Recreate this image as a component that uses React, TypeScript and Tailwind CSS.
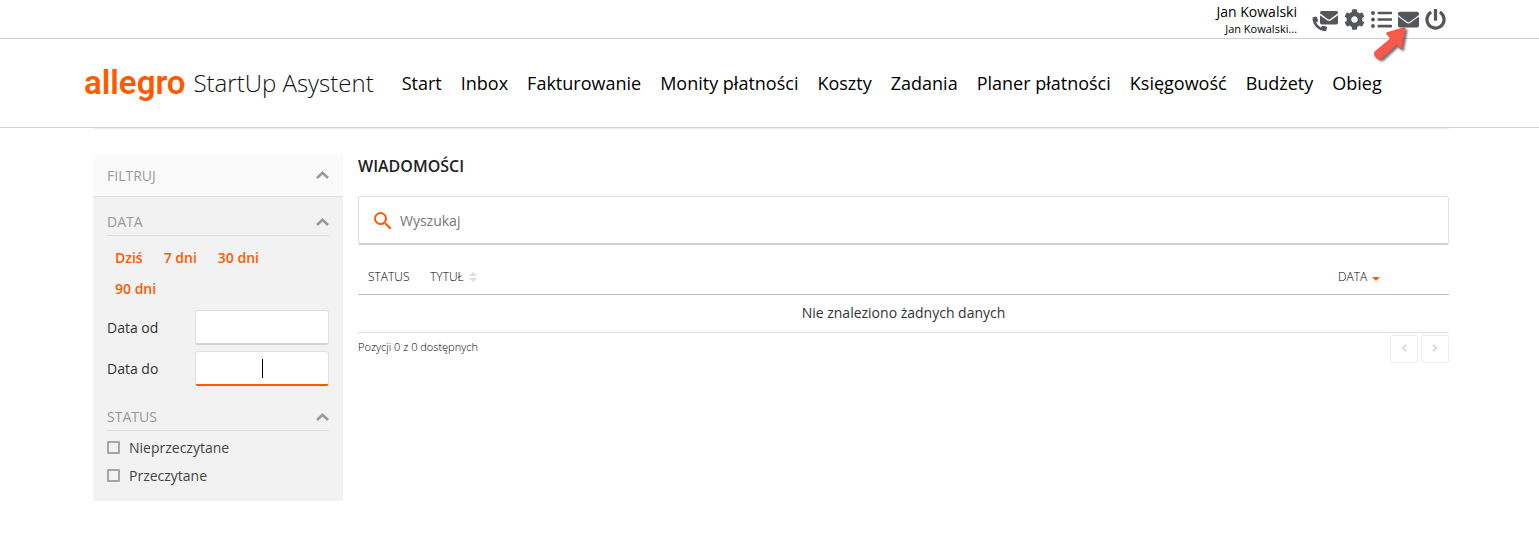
import { useState } from 'react'
import type { ReactNode } from 'react'
import { FaCog, FaEnvelope, FaListUl, FaPowerOff } from 'react-icons/fa'
import { MdSearch } from 'react-icons/md'

const navItems = [
  'Start',
  'Inbox',
  'Fakturowanie',
  'Monity płatności',
  'Koszty',
  'Zadania',
  'Planer płatności',
  'Księgowość',
  'Budżety',
  'Obieg',
]

const ranges = ['Dziś', '7 dni', '30 dni', '90 dni']

function ArrowUp() {
  return (
    <svg className="w-[13px] h-2" viewBox="0 0 13 8" fill="none" aria-hidden="true">
      <path d="M1 7l5.500-5.200L12 7" stroke="#999" strokeWidth="2.600" />
    </svg>
  )
}

function PhoneMail() {
  return (
    <svg className="w-[26px] h-[22px]" viewBox="0 0 26 22" fill="currentColor" aria-hidden="true">
      <path d="M.5 8.300q0-.8.700-1l2.600-.8q.7-.2 1 .5l1.300 3.200q.2.600-.3 1.100l-1.700 1.300q1.500 3.200 4.700 4.800l1.500-1.700q.4-.5 1.100-.3l3.200 1.400q.6.300.5 1l-.8 2.700q-.2.700-1 .7C6.500 21 .5 15.300.5 8.300z" />
      <path d="M7 0h19v16H7z" fill="#fff" />
      <path d="M9.700 1h14.600q1.700 0 1.700 1.700v.6l-8 5.900q-1 .7-2 0L8 3.300v-.6Q8 1 9.700 1z" />
      <path d="M8 5.200l7.300 5.300q1.700 1.100 3.400 0L26 5.200v7.600q0 1.700-1.700 1.700H9.700Q8 14.500 8 12.800z" />
    </svg>
  )
}

function PointerArrow() {
  return (
    <svg
      className="absolute left-[-26px] top-[17px] w-10 h-10 pointer-events-none drop-shadow-[2px_2px_1px_rgba(0,0,0,0.55)]"
      viewBox="0 0 40 40"
      aria-hidden="true"
    >
      <path
        d="M32 1.500L15 6.500q-1.400.6-.4 1.500l4.200 4.300L3 25.500q-2 2.500.6 5.600t5.800 1.700L24.500 19l4 3.800q1 .7 1.300-.5L33.300 2.800q0-1.500-1.300-1.300z"
        fill="#f9594a"
        stroke="#e04a3e"
        strokeWidth=".5"
      />
    </svg>
  )
}

function TopBar() {
  return (
    <div className="flex justify-end h-[39px] pr-[93px] border-b border-[#d0d0d0]">
      <div className="mr-[15px] text-right text-black">
        <p className="pt-[2px] text-[14px] leading-5">Jan Kowalski</p>
        <p className="text-[11px] leading-[14px]">Jan Kowalski…</p>
      </div>
      <div className="flex items-center gap-[6px] text-[#54565a]">
        <button type="button" aria-label="Kontakt" className="mt-1">
          <PhoneMail />
        </button>
        <button type="button" aria-label="Ustawienia">
          <FaCog className="w-[21px] h-[21px]" />
        </button>
        <button type="button" aria-label="Lista">
          <FaListUl className="w-[21px] h-[21px]" />
        </button>
        <button type="button" aria-label="Wiadomości" className="relative">
          <FaEnvelope className="w-[21px] h-[21px]" />
          <PointerArrow />
        </button>
        <button type="button" aria-label="Wyloguj">
          <FaPowerOff className="w-[21px] h-[21px]" />
        </button>
      </div>
    </div>
  )
}

function Header() {
  return (
    <header className="flex items-center h-[89px] pl-[84px] pr-[90px] border-b border-[#d0d0d0]">
      <a href="#" className="flex items-center whitespace-nowrap">
        <span className="font-['Roboto',sans-serif] font-semibold text-[33px] leading-10 text-[#ff5a00]">allegro</span>
        <span className="ml-2 text-[24px] leading-8 font-light text-[#111]">StartUp Asystent</span>
      </a>
      <nav className="flex gap-[19px] ml-7 text-[18px] text-black whitespace-nowrap">
        {navItems.map((item) => (
          <a key={item} href="#">
            {item}
          </a>
        ))}
      </nav>
    </header>
  )
}

function FilterSection({ title, className, children }: { title: string; className?: string; children: ReactNode }) {
  return (
    <section className={className}>
      <button
        type="button"
        className="flex items-center justify-between w-full h-7 border-b border-[#dfdfdf] text-[14px] text-[#999]"
      >
        {title}
        <ArrowUp />
      </button>
      {children}
    </section>
  )
}

function Sidebar() {
  const [from, setFrom] = useState('')
  const [to, setTo] = useState('')

  return (
    <aside className="w-[250px] shrink-0 bg-[#f2f2f2] text-[14px] text-[#333]">
      <button
        type="button"
        className="flex items-center justify-between w-full h-[43px] px-[14px] bg-[#fafafa] border-b border-[#dfdfdf] text-[#999]"
      >
        FILTRUJ
        <ArrowUp />
      </button>
      <div className="px-[14px] pt-[11px] pb-3">
        <FilterSection title="DATA">
          <div className="flex flex-wrap gap-x-[5px] pt-[6px]">
            {ranges.map((range) => (
              <button key={range} type="button" className="h-[31px] px-2 font-semibold text-[#ff5a00]">
                {range}
              </button>
            ))}
          </div>
          <div className="flex items-center justify-between mt-[6px]">
            <label htmlFor="date-from">Data od</label>
            <input
              id="date-from"
              value={from}
              onChange={(e) => setFrom(e.target.value)}
              className="w-[134px] h-[35px] rounded-[3px] border border-b-2 border-[#e0e0e0] border-b-[#d4d6d6] bg-white text-center outline-none"
            />
          </div>
          <div className="flex items-center justify-between mt-[6px]">
            <label htmlFor="date-to">Data do</label>
            <div className="relative">
              <input
                id="date-to"
                value={to}
                onChange={(e) => setTo(e.target.value)}
                className="block w-[134px] h-[35px] rounded-[3px] border border-b-2 border-[#e0e0e0] border-b-[#ff5a00] bg-white text-center outline-none"
              />
              {to === '' && <span className="absolute left-[67px] top-2 w-px h-[19px] bg-black pointer-events-none" />}
            </div>
          </div>
        </FilterSection>
        <FilterSection title="STATUS" className="mt-[17px]">
          <div className="flex flex-col pt-[2px] text-[#444]">
            {['Nieprzeczytane', 'Przeczytane'].map((label) => (
              <label key={label} className="flex items-center gap-[9px] h-7">
                <input
                  type="checkbox"
                  className="appearance-none w-[13px] h-[13px] rounded-[1px] border-2 border-[#a6a6a6] checked:bg-[#ff5a00]"
                />
                {label}
              </label>
            ))}
          </div>
        </FilterSection>
      </div>
    </aside>
  )
}

function Messages() {
  const [query, setQuery] = useState('')

  return (
    <main className="flex-1 min-w-0 text-[#333]">
      <h1 className="h-[42px] text-[16px] leading-6 font-semibold text-[#222]">WIADOMOŚCI</h1>
      <label className="flex items-center h-[49px] pl-3 border border-b-2 border-[#e0e0e0] border-b-[#d0d0d0] rounded-[3px]">
        <MdSearch className="w-6 h-6 mt-[2px] text-[#ff5a00]" />
        <input
          value={query}
          onChange={(e) => setQuery(e.target.value)}
          placeholder="Wyszukaj"
          aria-label="Wyszukaj"
          className="flex-1 ml-[5px] text-[14px] outline-none placeholder:text-[#777]"
        />
      </label>
      <table className="w-full mt-[14px]">
        <thead>
          <tr className="h-[35px] border-b border-[#bbb] text-left text-[12px] text-black">
            <th className="w-[62px] pt-[2px] pl-[10px] font-light">STATUS</th>
            <th className="pt-[2px] pl-[10px] font-light">
              <button type="button" className="flex items-center gap-[5px]">
                TYTUŁ
                <svg className="w-2 h-[10px]" viewBox="0 0 8 10" fill="#ddd" aria-hidden="true">
                  <path d="M4 0l4 4H0zM4 10l4-4H0z" />
                </svg>
              </button>
            </th>
            <th className="w-[111px] pt-[2px] font-light">
              <button type="button" className="flex items-center gap-[5px]">
                DATA
                <svg className="w-2 h-1 mt-1" viewBox="0 0 8 4" fill="#ff5a00" aria-hidden="true">
                  <path d="M0 0h8L4 4z" />
                </svg>
              </button>
            </th>
          </tr>
        </thead>
        <tbody>
          <tr className="h-[38px] border-b border-[#e0e0e0]">
            <td colSpan={3} className="pb-[2px] text-center text-[14px]">
              Nie znaleziono żadnych danych
            </td>
          </tr>
        </tbody>
      </table>
      <div className="flex justify-between pt-[2px]">
        <p className="pt-1 text-[11px] leading-4 font-light text-black">Pozycji 0 z 0 dostępnych</p>
        <div className="flex gap-[3px]">
          {['Poprzednia', 'Następna'].map((label, i) => (
            <button
              key={label}
              type="button"
              aria-label={label}
              className="flex items-center justify-center w-7 h-7 pb-[2px] border border-[#eee] rounded-[2px]"
            >
              <svg className="w-[6px] h-2" viewBox="0 0 6 8" fill="none" aria-hidden="true">
                <path d={i === 0 ? 'M5 .8L1.800 4 5 7.200' : 'M1 .8L4.200 4 1 7.200'} stroke="#ddd" strokeWidth="2" />
              </svg>
            </button>
          ))}
        </div>
      </div>
    </main>
  )
}

export default function App() {
  return (
    <div className="bg-white font-['Open_Sans','Noto_Sans',sans-serif]">
      <TopBar />
      <Header />
      <div className="ml-[93px] mr-[90px] border-t border-[#eee] pt-[25px] flex items-start gap-[15px]">
        <Sidebar />
        <Messages />
      </div>
    </div>
  )
}
